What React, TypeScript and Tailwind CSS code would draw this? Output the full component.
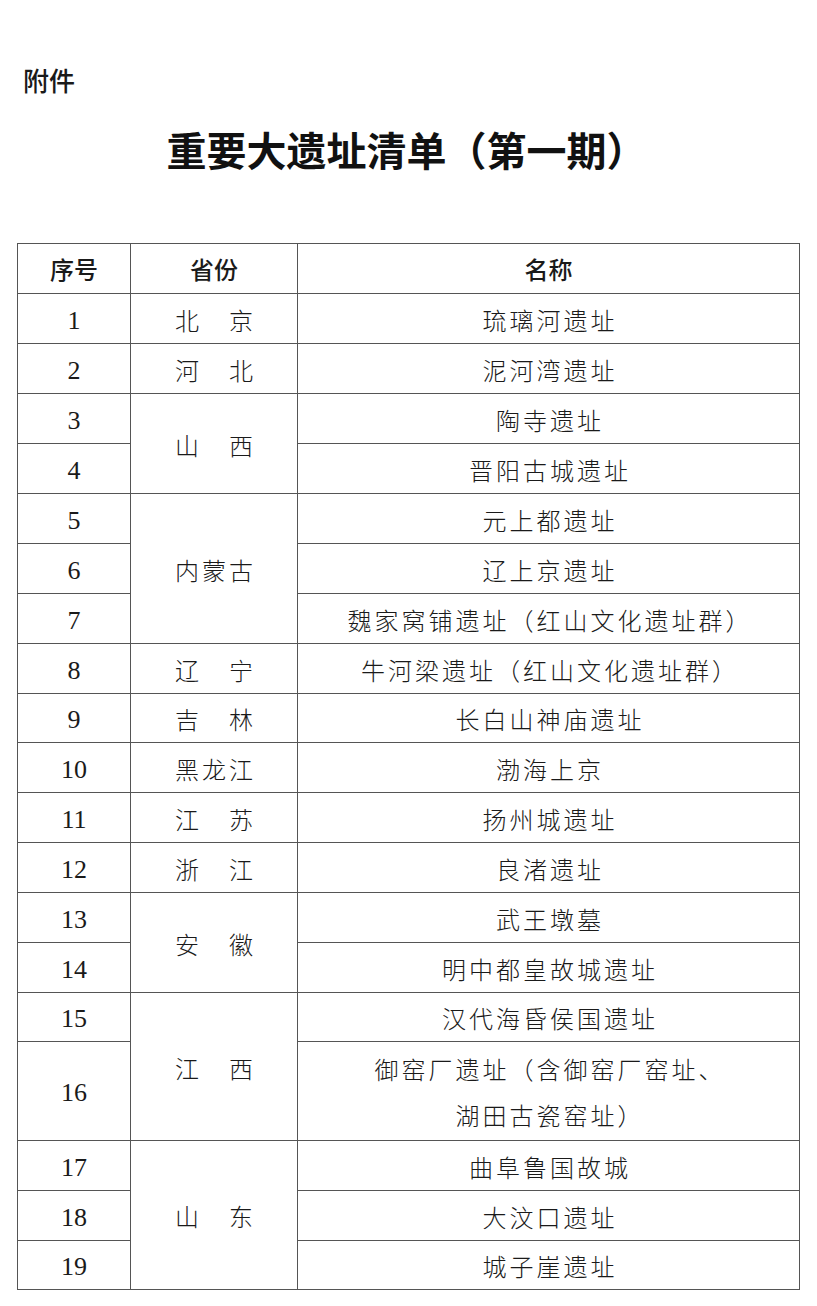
import React from 'react';

type Row = { no: string; name: string[]; prov?: string; span?: number; h?: 'short' | 'tall' };

const rows: Row[] = [
  { no: '1', prov: '北　京', span: 1, name: ['琉璃河遗址'] },
  { no: '2', prov: '河　北', span: 1, name: ['泥河湾遗址'] },
  { no: '3', prov: '山　西', span: 2, name: ['陶寺遗址'] },
  { no: '4', name: ['晋阳古城遗址'] },
  { no: '5', prov: '内蒙古', span: 3, name: ['元上都遗址'] },
  { no: '6', name: ['辽上京遗址'] },
  { no: '7', name: ['魏家窝铺遗址（红山文化遗址群）'] },
  { no: '8', prov: '辽　宁', span: 1, name: ['牛河梁遗址（红山文化遗址群）'] },
  { no: '9', prov: '吉　林', span: 1, name: ['长白山神庙遗址'], h: 'short' },
  { no: '10', prov: '黑龙江', span: 1, name: ['渤海上京'] },
  { no: '11', prov: '江　苏', span: 1, name: ['扬州城遗址'] },
  { no: '12', prov: '浙　江', span: 1, name: ['良渚遗址'] },
  { no: '13', prov: '安　徽', span: 2, name: ['武王墩墓'] },
  { no: '14', name: ['明中都皇故城遗址'] },
  { no: '15', prov: '江　西', span: 2, name: ['汉代海昏侯国遗址'], h: 'short' },
  { no: '16', h: 'tall', name: ['御窑厂遗址（含御窑厂窑址、', '湖田古瓷窑址）'] },
  { no: '17', prov: '山　东', span: 3, name: ['曲阜鲁国故城'] },
  { no: '18', name: ['大汶口遗址'] },
  { no: '19', name: ['城子崖遗址'], h: 'short' },
];

const cjk = { fontFamily: '"Noto Sans CJK SC", sans-serif' };
const num = { fontFamily: '"Liberation Serif", serif' };

const rowH = (h?: Row['h']) =>
  h === 'tall' ? 'h-[99px]' : h === 'short' ? 'h-[49px]' : 'h-[50px]';

export default function App() {
  return (
    <div className="w-[817px] min-h-[1306px] bg-white text-[#1a1a1a]">
      <div className="pt-[61px] pl-[23px] text-[26px] leading-[38px] font-medium" style={cjk}>附件</div>
      <h1
        className="mt-[25px] text-center text-[40px] font-bold leading-[50px] text-[#111] pr-[4px]"
        style={cjk}
      >
        重要大遗址清单（第一期）
      </h1>
      <div className="pt-[69px] pl-[17px]">
        <table className="border-collapse w-[782px] table-fixed" style={cjk}>
          <colgroup>
            <col className="w-[113px]" />
            <col className="w-[167px]" />
            <col className="w-[502px]" />
          </colgroup>
          <thead>
            <tr className="h-[50px]">
              <th className="border border-[#555] text-[24px] font-medium text-center">序号</th>
              <th className="border border-[#555] text-[24px] font-medium text-center">省份</th>
              <th className="border border-[#555] text-[24px] font-medium text-center">名称</th>
            </tr>
          </thead>
          <tbody>
            {rows.map((r) => (
              <tr key={r.no} className={rowH(r.h)}>
                <td className="border border-[#555] text-center text-[26px] leading-[30px] p-0 pt-[4px]" style={num}>
                  {r.no}
                </td>
                {r.prov && (
                  <td
                    rowSpan={r.span}
                    className="border border-[#555] text-center text-[24px] leading-[34px] tracking-[3px] font-light p-0 pl-[3px] pt-[2px]"
                  >
                    {r.prov}
                  </td>
                )}
                <td className="border border-[#555] text-center text-[24px] tracking-[3px] font-light leading-[46px] p-0 pl-[3px] pt-[2px]">
                  {r.name.map((line) => (
                    <div key={line}>{line}</div>
                  ))}
                </td>
              </tr>
            ))}
          </tbody>
        </table>
      </div>
    </div>
  );
}
